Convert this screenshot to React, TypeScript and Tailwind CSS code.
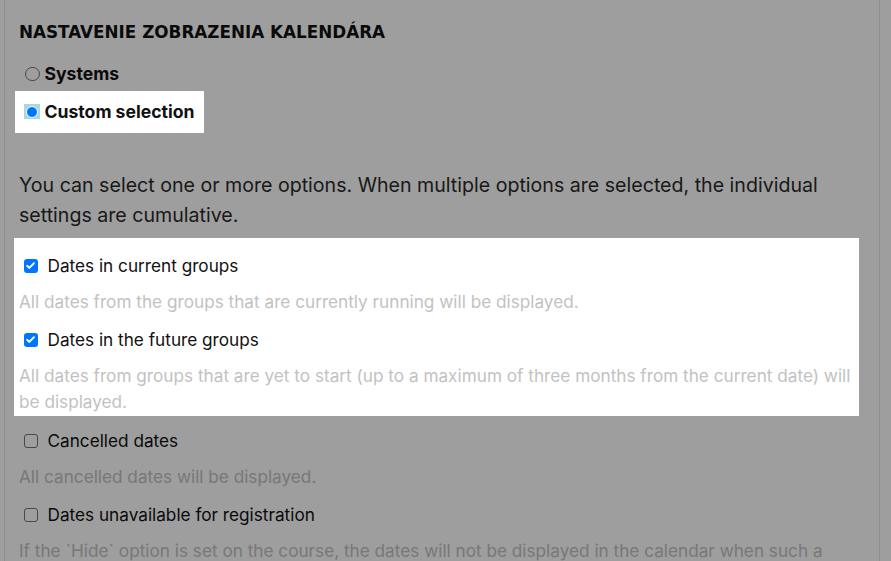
const body = "font-['Inter',_'Noto_Sans',_sans-serif]";

interface OptionProps {
  label: string;
  hint: string;
  checked?: boolean;
}

function Checkbox({ checked }: { checked?: boolean }) {
  if (checked) {
    return (
      <span className="ml-[4.5px] grid h-[14.5px] w-[14.5px] shrink-0 place-items-center rounded-[3px] bg-[#0075ff]">
        <svg viewBox="0 0 12 12" className="h-[11px] w-[11px]" fill="none">
          <path d="M2.3 6.3 4.8 8.7 9.8 3.4" stroke="white" strokeWidth="2" strokeLinecap="round" strokeLinejoin="round" />
        </svg>
      </span>
    );
  }
  return <span className="ml-[4.5px] h-[14.5px] w-[14.5px] shrink-0 rounded-[3px] border border-[#767676] bg-white" />;
}

function Option({ label, hint, checked }: OptionProps) {
  return (
    <div>
      <label className="mt-[12.5px] flex h-6 items-center">
        <Checkbox checked={checked} />
        <span className="ml-[9.5px] text-[17.2px] leading-6 text-[#111]">{label}</span>
      </label>
      <p className="mt-[11.5px] text-[17.2px] leading-[26px] text-[#c2c2c2]">{hint}</p>
    </div>
  );
}

export default function App() {
  return (
    <div className={`relative h-[561px] overflow-hidden bg-white ${body}`}>
      <div className="ml-[4px] min-h-full w-[876px] border-x border-[#e5e5e5] pl-[14px] pr-[14px] pt-[19.5px]">
        <h2 className="font-['DejaVu_Sans',_sans-serif] text-[16.8px] font-bold leading-6 text-[#111]">
          NASTAVENIE ZOBRAZENIA KALENDÁRA
        </h2>

        <div className="mt-[18.7px] flex h-6 items-center">
          <span className="ml-[6px] h-[14.5px] w-[14.5px] rounded-full border border-[#767676] bg-white" />
          <span className="ml-[5px] text-[17.6px] font-bold leading-6 text-[#111]">Systems</span>
        </div>

        <div className="relative z-20 -ml-[4px] mt-[4.8px] w-fit bg-white py-[9px] pl-[9px] pr-[9px]">
          <div className="flex h-6 items-center">
            <span className="grid h-[15px] w-4 place-items-center bg-[#a8dad9]">
              <span className="h-[12px] w-[12px] rounded-full border border-white bg-[#0075ff]" />
            </span>
            <span className="ml-[4.5px] text-[17.6px] font-bold leading-6 text-[#111]">Custom selection</span>
          </div>
        </div>

        <p className="mt-[38.5px] text-[19.6px] leading-[29.4px] text-[#2b2b2b]">
          You can select one or more options. When multiple options are selected, the individual settings are
          cumulative.
        </p>

        <div className="relative z-20 -ml-[5px] mt-[7.7px] w-[845px] bg-white pb-[1px] pl-[5px] pr-[4px] pt-[3.5px]">
          <Option
            checked
            label="Dates in current groups"
            hint="All dates from the groups that are currently running will be displayed."
          />
          <Option
            checked
            label="Dates in the future groups"
            hint="All dates from groups that are yet to start (up to a maximum of three months from the current date) will be displayed."
          />
        </div>

        <Option label="Cancelled dates" hint="All cancelled dates will be displayed." />
        <Option
          label="Dates unavailable for registration"
          hint="If the `Hide` option is set on the course, the dates will not be displayed in the calendar when such a course is not available for registration."
        />
      </div>

      {/* spotlight dimming layer */}
      <div className="absolute inset-0 z-10 bg-[rgba(0,0,0,0.38)]" />
    </div>
  );
}
